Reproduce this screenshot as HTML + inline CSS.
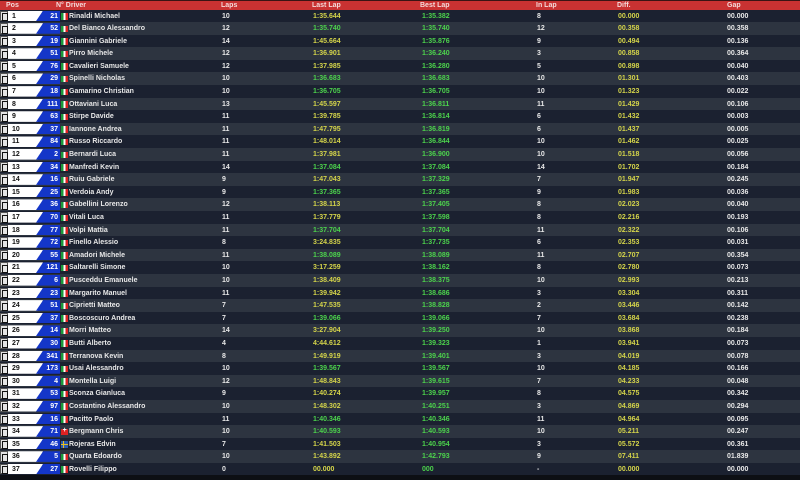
<!DOCTYPE html>
<html><head><meta charset="utf-8"><style>
*{margin:0;padding:0;box-sizing:border-box}
body{width:800px;height:480px;background:#0d0f14;overflow:hidden;font-family:"Liberation Sans",sans-serif;font-size:7px;color:#e8e8e8;font-weight:bold}
.hd{position:absolute;left:0;top:0;width:800px;height:10px;background:#c93232;border-top:1px solid #3a1414}
.hd span{position:absolute;top:1px;line-height:8px;color:#f4dada}
.r{position:relative;height:12.6px;background:#1b2130}
.r:nth-child(even){background:#2d3440}
#t{position:absolute;top:9.5px;left:0;width:800px}
.r span{position:absolute;top:1px;line-height:12.6px;white-space:nowrap}
.ic{position:absolute;left:0;top:1px;width:8px;height:10.6px;background:#e4e4e4;border:1px solid #555}
.ic:after{content:"";position:absolute;left:1px;top:1.5px;width:4px;height:6px;border:1.5px solid #111;border-left-width:1px}
.w{position:absolute;left:8px;top:1px;width:35px;height:10.6px;background:#fff;clip-path:polygon(0 0,100% 0,85% 100%,0 100%)}
.b{position:absolute;left:36px;top:1px;width:24px;height:10.6px;background:#1436c8;clip-path:polygon(30% 0,100% 0,100% 100%,0 100%)}
.p{left:12px;color:#111}
.n{left:36px;width:22px;text-align:right;color:#fff}
.f{position:absolute;left:61px;top:3.5px;width:7px;height:6.5px;background:linear-gradient(90deg,#1a9a3a 33%,#fff 33%,#fff 66%,#d22 66%)}
.ch{background:#d22}.ch:after{content:"+";position:absolute;left:1.5px;top:-2px;color:#fff;font-size:7px}
.se{background:linear-gradient(#2a5ab0 40%,#e8c020 40%,#e8c020 60%,#2a5ab0 60%)}.se:after{content:"";position:absolute;left:2px;top:0;width:1.2px;height:100%;background:#e8c020}
.d{left:69px}.l{left:222px}.ll{left:313px;color:#d4d44a}.g{color:#4cd24c!important}.bl{left:422px;color:#4cd24c}.il{left:537px}.df{left:618px;color:#d4d44a}.gp{left:727px}
</style></head><body>
<div class="hd"><span style="left:6px">Pos</span><span style="left:56px">N° Driver</span><span style="left:221px">Laps</span><span style="left:312px">Last Lap</span><span style="left:420px">Best Lap</span><span style="left:536px">In Lap</span><span style="left:617px">Diff.</span><span style="left:727px">Gap</span></div>
<div id="t">
<div class="r"><i class="ic"></i><i class="w"></i><i class="b"></i><span class="p">1</span><span class="n">21</span><i class="f"></i><span class="d">Rinaldi Michael</span><span class="l">10</span><span class="ll">1:35.644</span><span class="bl">1:35.382</span><span class="il">8</span><span class="df">00.000</span><span class="gp">00.000</span></div>
<div class="r"><i class="ic"></i><i class="w"></i><i class="b"></i><span class="p">2</span><span class="n">52</span><i class="f"></i><span class="d">Del Bianco Alessandro</span><span class="l">12</span><span class="ll g">1:35.740</span><span class="bl">1:35.740</span><span class="il">12</span><span class="df">00.358</span><span class="gp">00.358</span></div>
<div class="r"><i class="ic"></i><i class="w"></i><i class="b"></i><span class="p">3</span><span class="n">19</span><i class="f"></i><span class="d">Giannini Gabriele</span><span class="l">14</span><span class="ll">1:45.664</span><span class="bl">1:35.876</span><span class="il">9</span><span class="df">00.494</span><span class="gp">00.136</span></div>
<div class="r"><i class="ic"></i><i class="w"></i><i class="b"></i><span class="p">4</span><span class="n">51</span><i class="f"></i><span class="d">Pirro Michele</span><span class="l">12</span><span class="ll">1:36.901</span><span class="bl">1:36.240</span><span class="il">3</span><span class="df">00.858</span><span class="gp">00.364</span></div>
<div class="r"><i class="ic"></i><i class="w"></i><i class="b"></i><span class="p">5</span><span class="n">76</span><i class="f"></i><span class="d">Cavalieri Samuele</span><span class="l">12</span><span class="ll">1:37.985</span><span class="bl">1:36.280</span><span class="il">5</span><span class="df">00.898</span><span class="gp">00.040</span></div>
<div class="r"><i class="ic"></i><i class="w"></i><i class="b"></i><span class="p">6</span><span class="n">29</span><i class="f"></i><span class="d">Spinelli Nicholas</span><span class="l">10</span><span class="ll g">1:36.683</span><span class="bl">1:36.683</span><span class="il">10</span><span class="df">01.301</span><span class="gp">00.403</span></div>
<div class="r"><i class="ic"></i><i class="w"></i><i class="b"></i><span class="p">7</span><span class="n">18</span><i class="f"></i><span class="d">Gamarino Christian</span><span class="l">10</span><span class="ll g">1:36.705</span><span class="bl">1:36.705</span><span class="il">10</span><span class="df">01.323</span><span class="gp">00.022</span></div>
<div class="r"><i class="ic"></i><i class="w"></i><i class="b"></i><span class="p">8</span><span class="n">111</span><i class="f"></i><span class="d">Ottaviani Luca</span><span class="l">13</span><span class="ll">1:45.597</span><span class="bl">1:36.811</span><span class="il">11</span><span class="df">01.429</span><span class="gp">00.106</span></div>
<div class="r"><i class="ic"></i><i class="w"></i><i class="b"></i><span class="p">9</span><span class="n">63</span><i class="f"></i><span class="d">Stirpe Davide</span><span class="l">11</span><span class="ll">1:39.785</span><span class="bl">1:36.814</span><span class="il">6</span><span class="df">01.432</span><span class="gp">00.003</span></div>
<div class="r"><i class="ic"></i><i class="w"></i><i class="b"></i><span class="p">10</span><span class="n">37</span><i class="f"></i><span class="d">Iannone Andrea</span><span class="l">11</span><span class="ll">1:47.795</span><span class="bl">1:36.819</span><span class="il">6</span><span class="df">01.437</span><span class="gp">00.005</span></div>
<div class="r"><i class="ic"></i><i class="w"></i><i class="b"></i><span class="p">11</span><span class="n">84</span><i class="f"></i><span class="d">Russo Riccardo</span><span class="l">11</span><span class="ll">1:48.014</span><span class="bl">1:36.844</span><span class="il">10</span><span class="df">01.462</span><span class="gp">00.025</span></div>
<div class="r"><i class="ic"></i><i class="w"></i><i class="b"></i><span class="p">12</span><span class="n">2</span><i class="f"></i><span class="d">Bernardi Luca</span><span class="l">11</span><span class="ll">1:37.981</span><span class="bl">1:36.900</span><span class="il">10</span><span class="df">01.518</span><span class="gp">00.056</span></div>
<div class="r"><i class="ic"></i><i class="w"></i><i class="b"></i><span class="p">13</span><span class="n">34</span><i class="f"></i><span class="d">Manfredi Kevin</span><span class="l">14</span><span class="ll g">1:37.084</span><span class="bl">1:37.084</span><span class="il">14</span><span class="df">01.702</span><span class="gp">00.184</span></div>
<div class="r"><i class="ic"></i><i class="w"></i><i class="b"></i><span class="p">14</span><span class="n">16</span><i class="f"></i><span class="d">Ruiu Gabriele</span><span class="l">9</span><span class="ll">1:47.043</span><span class="bl">1:37.329</span><span class="il">7</span><span class="df">01.947</span><span class="gp">00.245</span></div>
<div class="r"><i class="ic"></i><i class="w"></i><i class="b"></i><span class="p">15</span><span class="n">25</span><i class="f"></i><span class="d">Verdoia Andy</span><span class="l">9</span><span class="ll g">1:37.365</span><span class="bl">1:37.365</span><span class="il">9</span><span class="df">01.983</span><span class="gp">00.036</span></div>
<div class="r"><i class="ic"></i><i class="w"></i><i class="b"></i><span class="p">16</span><span class="n">36</span><i class="f"></i><span class="d">Gabellini Lorenzo</span><span class="l">12</span><span class="ll">1:38.113</span><span class="bl">1:37.405</span><span class="il">8</span><span class="df">02.023</span><span class="gp">00.040</span></div>
<div class="r"><i class="ic"></i><i class="w"></i><i class="b"></i><span class="p">17</span><span class="n">70</span><i class="f"></i><span class="d">Vitali Luca</span><span class="l">11</span><span class="ll">1:37.779</span><span class="bl">1:37.598</span><span class="il">8</span><span class="df">02.216</span><span class="gp">00.193</span></div>
<div class="r"><i class="ic"></i><i class="w"></i><i class="b"></i><span class="p">18</span><span class="n">77</span><i class="f"></i><span class="d">Volpi Mattia</span><span class="l">11</span><span class="ll g">1:37.704</span><span class="bl">1:37.704</span><span class="il">11</span><span class="df">02.322</span><span class="gp">00.106</span></div>
<div class="r"><i class="ic"></i><i class="w"></i><i class="b"></i><span class="p">19</span><span class="n">72</span><i class="f"></i><span class="d">Finello Alessio</span><span class="l">8</span><span class="ll">3:24.835</span><span class="bl">1:37.735</span><span class="il">6</span><span class="df">02.353</span><span class="gp">00.031</span></div>
<div class="r"><i class="ic"></i><i class="w"></i><i class="b"></i><span class="p">20</span><span class="n">55</span><i class="f"></i><span class="d">Amadori Michele</span><span class="l">11</span><span class="ll g">1:38.089</span><span class="bl">1:38.089</span><span class="il">11</span><span class="df">02.707</span><span class="gp">00.354</span></div>
<div class="r"><i class="ic"></i><i class="w"></i><i class="b"></i><span class="p">21</span><span class="n">121</span><i class="f"></i><span class="d">Saltarelli Simone</span><span class="l">10</span><span class="ll">3:17.259</span><span class="bl">1:38.162</span><span class="il">8</span><span class="df">02.780</span><span class="gp">00.073</span></div>
<div class="r"><i class="ic"></i><i class="w"></i><i class="b"></i><span class="p">22</span><span class="n">6</span><i class="f"></i><span class="d">Pusceddu Emanuele</span><span class="l">10</span><span class="ll">1:38.409</span><span class="bl">1:38.375</span><span class="il">10</span><span class="df">02.993</span><span class="gp">00.213</span></div>
<div class="r"><i class="ic"></i><i class="w"></i><i class="b"></i><span class="p">23</span><span class="n">23</span><i class="f"></i><span class="d">Margarito Manuel</span><span class="l">11</span><span class="ll">1:39.942</span><span class="bl">1:38.686</span><span class="il">3</span><span class="df">03.304</span><span class="gp">00.311</span></div>
<div class="r"><i class="ic"></i><i class="w"></i><i class="b"></i><span class="p">24</span><span class="n">51</span><i class="f"></i><span class="d">Ciprietti Matteo</span><span class="l">7</span><span class="ll">1:47.535</span><span class="bl">1:38.828</span><span class="il">2</span><span class="df">03.446</span><span class="gp">00.142</span></div>
<div class="r"><i class="ic"></i><i class="w"></i><i class="b"></i><span class="p">25</span><span class="n">37</span><i class="f"></i><span class="d">Boscoscuro Andrea</span><span class="l">7</span><span class="ll g">1:39.066</span><span class="bl">1:39.066</span><span class="il">7</span><span class="df">03.684</span><span class="gp">00.238</span></div>
<div class="r"><i class="ic"></i><i class="w"></i><i class="b"></i><span class="p">26</span><span class="n">14</span><i class="f"></i><span class="d">Morri Matteo</span><span class="l">14</span><span class="ll">3:27.904</span><span class="bl">1:39.250</span><span class="il">10</span><span class="df">03.868</span><span class="gp">00.184</span></div>
<div class="r"><i class="ic"></i><i class="w"></i><i class="b"></i><span class="p">27</span><span class="n">30</span><i class="f"></i><span class="d">Butti Alberto</span><span class="l">4</span><span class="ll">4:44.612</span><span class="bl">1:39.323</span><span class="il">1</span><span class="df">03.941</span><span class="gp">00.073</span></div>
<div class="r"><i class="ic"></i><i class="w"></i><i class="b"></i><span class="p">28</span><span class="n">341</span><i class="f"></i><span class="d">Terranova Kevin</span><span class="l">8</span><span class="ll">1:49.919</span><span class="bl">1:39.401</span><span class="il">3</span><span class="df">04.019</span><span class="gp">00.078</span></div>
<div class="r"><i class="ic"></i><i class="w"></i><i class="b"></i><span class="p">29</span><span class="n">173</span><i class="f"></i><span class="d">Usai Alessandro</span><span class="l">10</span><span class="ll g">1:39.567</span><span class="bl">1:39.567</span><span class="il">10</span><span class="df">04.185</span><span class="gp">00.166</span></div>
<div class="r"><i class="ic"></i><i class="w"></i><i class="b"></i><span class="p">30</span><span class="n">4</span><i class="f"></i><span class="d">Montella Luigi</span><span class="l">12</span><span class="ll">1:48.843</span><span class="bl">1:39.615</span><span class="il">7</span><span class="df">04.233</span><span class="gp">00.048</span></div>
<div class="r"><i class="ic"></i><i class="w"></i><i class="b"></i><span class="p">31</span><span class="n">53</span><i class="f"></i><span class="d">Sconza Gianluca</span><span class="l">9</span><span class="ll">1:40.274</span><span class="bl">1:39.957</span><span class="il">8</span><span class="df">04.575</span><span class="gp">00.342</span></div>
<div class="r"><i class="ic"></i><i class="w"></i><i class="b"></i><span class="p">32</span><span class="n">97</span><i class="f"></i><span class="d">Costantino Alessandro</span><span class="l">10</span><span class="ll">1:48.302</span><span class="bl">1:40.251</span><span class="il">3</span><span class="df">04.869</span><span class="gp">00.294</span></div>
<div class="r"><i class="ic"></i><i class="w"></i><i class="b"></i><span class="p">33</span><span class="n">16</span><i class="f"></i><span class="d">Pacitto Paolo</span><span class="l">11</span><span class="ll g">1:40.346</span><span class="bl">1:40.346</span><span class="il">11</span><span class="df">04.964</span><span class="gp">00.095</span></div>
<div class="r"><i class="ic"></i><i class="w"></i><i class="b"></i><span class="p">34</span><span class="n">71</span><i class="f ch"></i><span class="d">Bergmann Chris</span><span class="l">10</span><span class="ll g">1:40.593</span><span class="bl">1:40.593</span><span class="il">10</span><span class="df">05.211</span><span class="gp">00.247</span></div>
<div class="r"><i class="ic"></i><i class="w"></i><i class="b"></i><span class="p">35</span><span class="n">46</span><i class="f se"></i><span class="d">Rojeras Edvin</span><span class="l">7</span><span class="ll">1:41.503</span><span class="bl">1:40.954</span><span class="il">3</span><span class="df">05.572</span><span class="gp">00.361</span></div>
<div class="r"><i class="ic"></i><i class="w"></i><i class="b"></i><span class="p">36</span><span class="n">5</span><i class="f"></i><span class="d">Quarta Edoardo</span><span class="l">10</span><span class="ll">1:43.892</span><span class="bl">1:42.793</span><span class="il">9</span><span class="df">07.411</span><span class="gp">01.839</span></div>
<div class="r"><i class="ic"></i><i class="w"></i><i class="b"></i><span class="p">37</span><span class="n">27</span><i class="f"></i><span class="d">Rovelli Filippo</span><span class="l">0</span><span class="ll">00.000</span><span class="bl">000</span><span class="il">-</span><span class="df">00.000</span><span class="gp">00.000</span></div>
</div>
</body></html>
